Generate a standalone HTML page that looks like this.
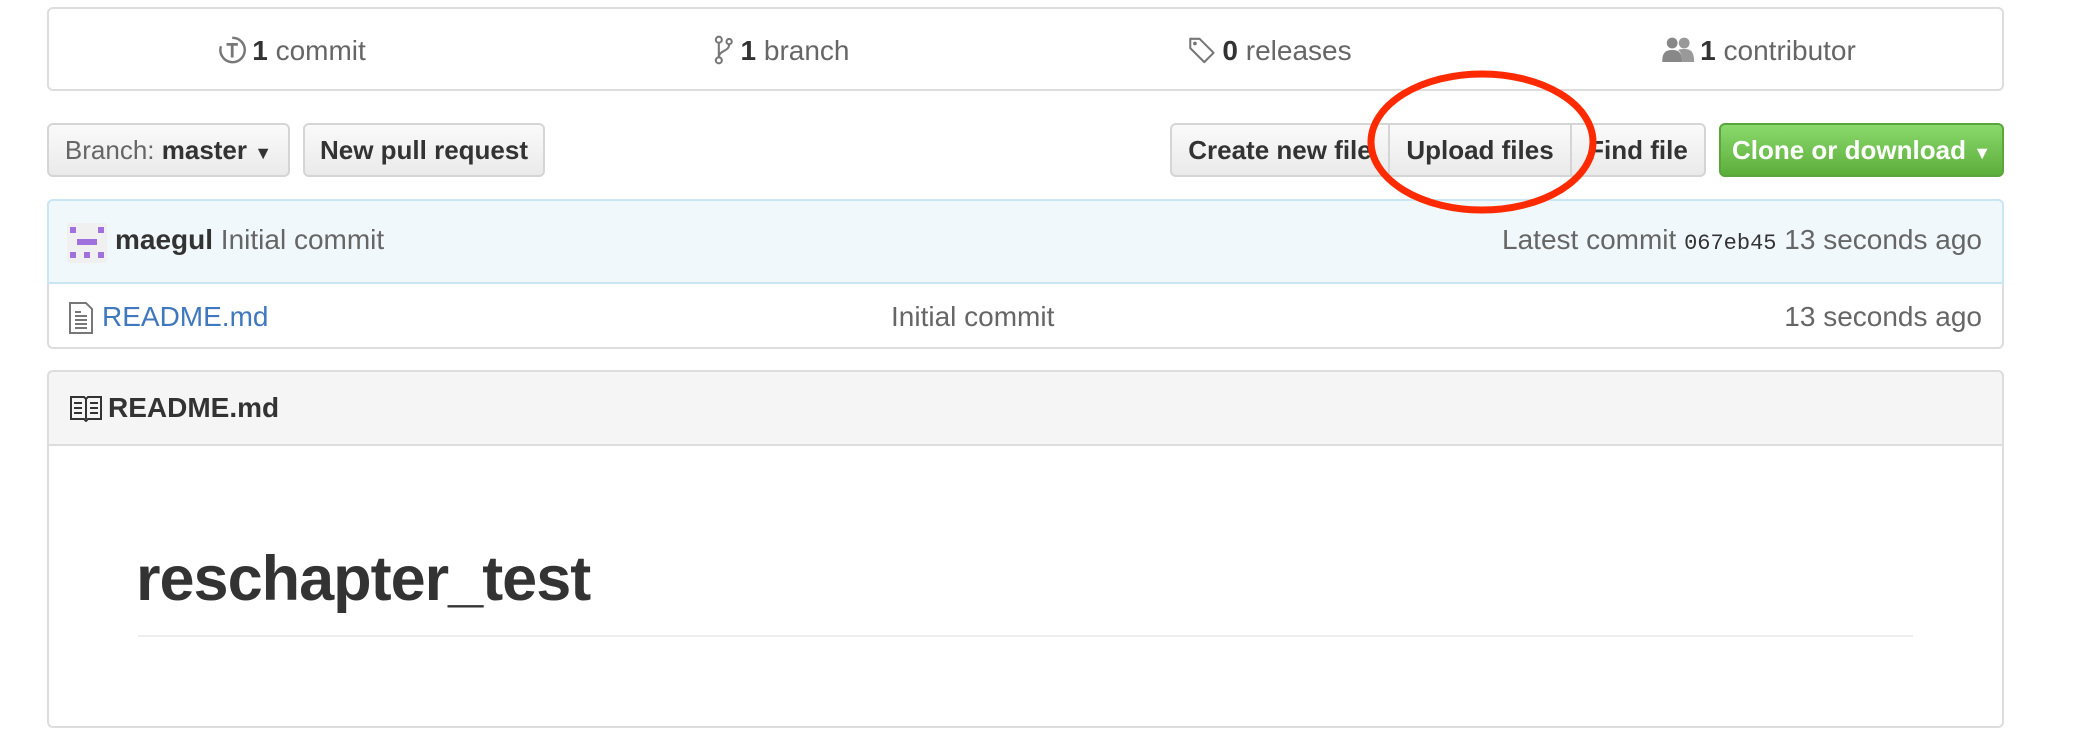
<!DOCTYPE html>
<html><head><meta charset="utf-8"><style>
*{box-sizing:border-box;margin:0;padding:0}
body{width:2076px;height:738px;background:#fff;font-family:"Liberation Sans",Arial,sans-serif;color:#333;position:relative;overflow:hidden}
.abs{position:absolute}
.stats{left:47px;top:7px;width:1957px;height:84px;border:2px solid #ddd;border-radius:6px}
.stat{position:absolute;top:0;height:80px;line-height:80px;font-size:28px;color:#666;white-space:nowrap;transform:translateX(-50%)}
.stat b{color:#333}
.stat svg{vertical-align:middle;margin-right:6px;position:relative;top:-3px}
.btn{position:absolute;top:123px;height:54px;line-height:50px;border:2px solid #d5d5d5;background:linear-gradient(#fafafa,#eaeaea);font-size:26px;font-weight:bold;color:#333;text-align:center;border-radius:6px;white-space:nowrap}
.tease{left:47px;top:199px;width:1957px;height:150px;border:2px solid #ddd;border-radius:6px}
.teaseh{left:47px;top:199px;width:1957px;height:85px;background:#f1f8fb;border:2px solid #c9e6f2;border-radius:6px 6px 0 0}
.readme{left:47px;top:370px;width:1957px;height:358px;border:2px solid #ddd;border-radius:6px}
.readmeh{left:47px;top:370px;width:1957px;height:76px;background:#f5f5f5;border:2px solid #ddd;border-radius:6px 6px 0 0}
.t{position:absolute;font-size:28px;white-space:nowrap}
</style></head><body>
<div class="abs stats"></div>
<div class="stat" style="left:292px;top:11px"><svg width="28" height="30" viewBox="0 0 14 16"><path d="M7 1.5A6.5 6.5 0 1 1 1 6" fill="none" stroke="#777" stroke-width="1.3"/><path d="M4 5h6M7 5v7" stroke="#777" stroke-width="1.5" fill="none"/></svg><b>1</b> commit</div>
<div class="stat" style="left:781px;top:11px"><svg width="22" height="30" viewBox="0 0 10 16"><circle cx="2.5" cy="2.5" r="1.6" fill="none" stroke="#777" stroke-width="1.1"/><circle cx="2.5" cy="13.5" r="1.6" fill="none" stroke="#777" stroke-width="1.1"/><circle cx="8" cy="3.5" r="1.4" fill="none" stroke="#777" stroke-width="1.1"/><path d="M2.5 4v8M8 5c0 4-5.5 3-5.5 7" fill="none" stroke="#777" stroke-width="1.1"/></svg><b>1</b> branch</div>
<div class="stat" style="left:1270px;top:11px"><svg width="28" height="30" viewBox="0 0 15 16"><path d="M1 2h5l7.5 7.5-5 5L1 7z" fill="none" stroke="#777" stroke-width="1.1" stroke-linejoin="round"/><circle cx="3.5" cy="4.5" r="1" fill="#777"/></svg><b>0</b> releases</div>
<div class="stat" style="left:1759px;top:11px"><svg width="32" height="28" viewBox="0 0 16 14"><circle cx="5" cy="3.5" r="2.7" fill="#888"/><circle cx="11" cy="3.5" r="2.7" fill="#999"/><path d="M0 13c0-5 2-6 5-6s5 1 5 6z" fill="#888"/><path d="M10 13c0-4-1-5-2-6 1-.5 2-.5 3-.5 3 0 5 1 5 6.5z" fill="#999"/></svg><b>1</b> contributor</div>

<div class="btn" style="left:47px;width:243px;font-weight:normal;color:#666">Branch: <b style="color:#333">master</b> <span style="font-size:18px;color:#333">▼</span></div>
<div class="btn" style="left:303px;width:242px">New pull request</div>
<div class="btn" style="left:1170px;width:220px;border-radius:6px 0 0 6px">Create new file</div>
<div class="btn" style="left:1388px;width:184px;border-radius:0">Upload files</div>
<div class="btn" style="left:1570px;width:136px;border-radius:0 6px 6px 0">Find file</div>
<div class="btn" style="left:1719px;width:285px;background:linear-gradient(#8ad96c,#5cae3b);border-color:#5aa53c;color:#fff">Clone or download <span style="font-size:18px">▼</span></div>

<div class="abs tease"></div>
<div class="abs teaseh"></div>
<svg class="abs" style="left:67px;top:223px" width="40" height="40" viewBox="0 0 40 40"><rect width="40" height="40" rx="3" fill="#f0f0f0"/><g fill="#a071dd"><rect x="3" y="4" width="6" height="6"/><rect x="31" y="4" width="6" height="6"/><rect x="10" y="16" width="20" height="6"/><rect x="3" y="29" width="6" height="6"/><rect x="17" y="29" width="6" height="6"/><rect x="31" y="29" width="6" height="6"/></g></svg>
<div class="t" style="left:115px;top:224px;color:#666"><b style="color:#333">maegul</b> Initial commit</div>
<div class="t" style="right:94px;top:224px;color:#666">Latest commit <span style="font-family:'Liberation Mono',monospace;font-size:22px;color:#333">067eb45</span> 13 seconds ago</div>
<svg class="abs" style="left:68px;top:302px" width="26" height="32" viewBox="0 0 12 16"><path d="M.5.5h8l3 3v12h-11z" fill="none" stroke="#777" stroke-width="1"/><path d="M3 7h6M3 9h6M3 11h6M3 13h6M3 5h3" stroke="#777" stroke-width="1"/></svg>
<div class="t" style="left:102px;top:301px;color:#4078c0">README.md</div>
<div class="t" style="left:891px;top:301px;color:#666">Initial commit</div>
<div class="t" style="right:94px;top:301px;color:#666">13 seconds ago</div>

<div class="abs readme"></div>
<div class="abs readmeh"></div>
<svg class="abs" style="left:70px;top:396px" width="32" height="26" viewBox="0 0 16 13"><path d="M.5.5h6.5l1 1 1-1h6.5v11h-6.5l-1 1-1-1h-6.5z" fill="none" stroke="#333" stroke-width="1"/><path d="M8 1.5v10M2 3.5h4M2 6h4M2 8.5h4M10 3.5h4M10 6h4M10 8.5h4" stroke="#333" stroke-width="1"/></svg>
<div class="t" style="left:108px;top:392px;font-weight:bold;color:#333">README.md</div>
<div class="t" style="left:136px;top:543px;font-size:63px;font-weight:bold;color:#333;letter-spacing:-1px">reschapter_test</div>
<div class="abs" style="left:138px;top:635px;width:1775px;height:2px;background:#eee"></div>

<svg class="abs" style="left:1360px;top:64px" width="250" height="156"><ellipse cx="122" cy="78" rx="111" ry="68" fill="none" stroke="#ff2a00" stroke-width="7"/></svg>
</body></html>
